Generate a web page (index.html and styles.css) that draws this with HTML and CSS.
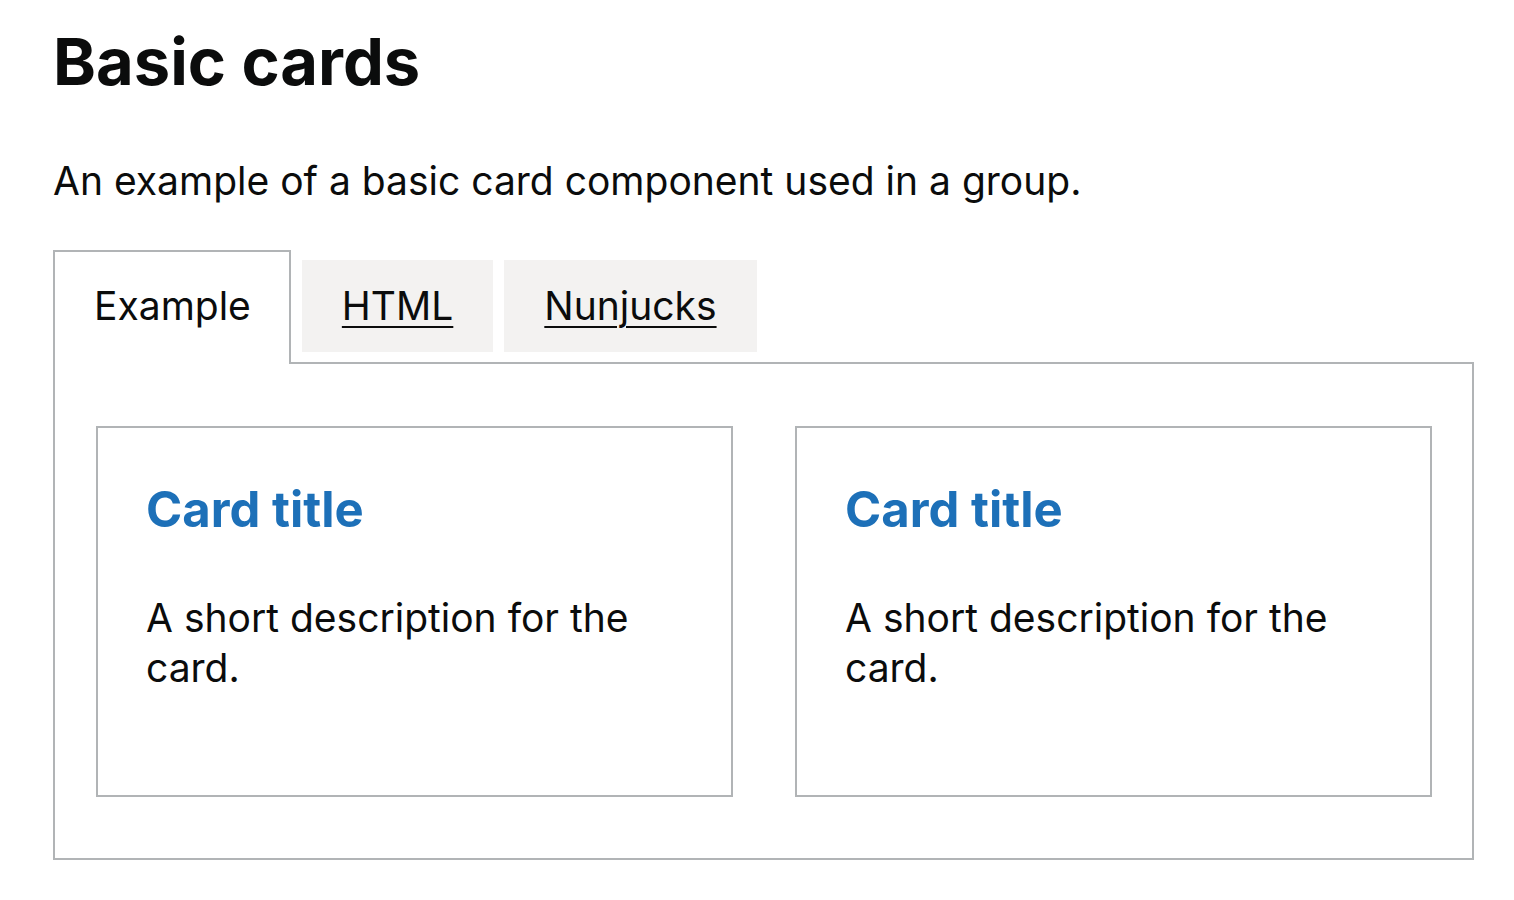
FILE: index.html
```html
<!DOCTYPE html>
<html lang="en">
<head>
<meta charset="utf-8">
<title>Basic cards</title>
<link rel="stylesheet" href="styles.css">
</head>
<body>
<main class="page">
  <h1 class="title">Basic cards</h1>
  <p class="lead">An example of a basic card component used in a group.</p>
  <div class="tabs">
    <ul class="tab-list">
      <li class="tab tab--selected"><a class="tab-link" href="#example">Example</a></li>
      <li class="tab"><a class="tab-link" href="#html">HTML</a></li>
      <li class="tab"><a class="tab-link" href="#nunjucks">Nunjucks</a></li>
    </ul>
    <div class="panel" id="example">
      <div class="card-group">
        <div class="card">
          <h2 class="card-title">Card title</h2>
          <p class="card-text">A short description for the card.</p>
        </div>
        <div class="card">
          <h2 class="card-title">Card title</h2>
          <p class="card-text">A short description for the card.</p>
        </div>
      </div>
    </div>
  </div>
</main>
</body>
</html>
```
FILE: styles.css
```css
* { box-sizing: border-box; }
html, body { margin: 0; padding: 0; background: #fff; }
body {
  font-family: Inter, "Noto Sans", "Liberation Sans", sans-serif;
  color: #0b0c0c;
}
.page {
  padding: 0 40px 0 53px;
}
.title {
  margin: 0;
  padding-top: 22px;
  font-size: 65px;
  line-height: 80px;
  font-weight: 700;
}
.lead {
  margin: 54px 0 0;
  font-size: 39px;
  line-height: 50px;
}
.tabs {
  margin-top: 44px;
}
.tab-list {
  list-style: none;
  margin: 0;
  padding: 0;
  display: flex;
  align-items: flex-start;
}
.tab {
  margin-right: 11px;
  margin-top: 10px;
  padding: 20px 40px;
  background: #f3f2f1;
  font-size: 39px;
  line-height: 52px;
}
.tab-link {
  color: #0b0c0c;
  text-decoration: underline;
  text-decoration-thickness: 2px;
  text-underline-offset: 6px;
}
.tab--selected {
  position: relative;
  margin-top: 0;
  margin-bottom: -2px;
  padding: 28px 38px 32px 39px;
  background: #fff;
  border: 2px solid #b1b4b6;
  border-bottom: 0;
}
.tab--selected .tab-link { text-decoration: none; }
.panel {
  border: 2px solid #b1b4b6;
  padding: 62px 40px 61px 41px;
  width: 1421px;
}
.card-group {
  display: grid;
  grid-template-columns: 1fr 1fr;
  gap: 62px;
}
.card {
  border: 2px solid #b1b4b6;
  padding: 52px 48px 102px 48px;
}
.card-title {
  margin: 0;
  font-size: 49px;
  line-height: 60px;
  font-weight: 700;
  color: #1d70b8;
}
.card-text {
  margin: 53px 0 0;
  font-size: 39px;
  line-height: 50px;
}
```
